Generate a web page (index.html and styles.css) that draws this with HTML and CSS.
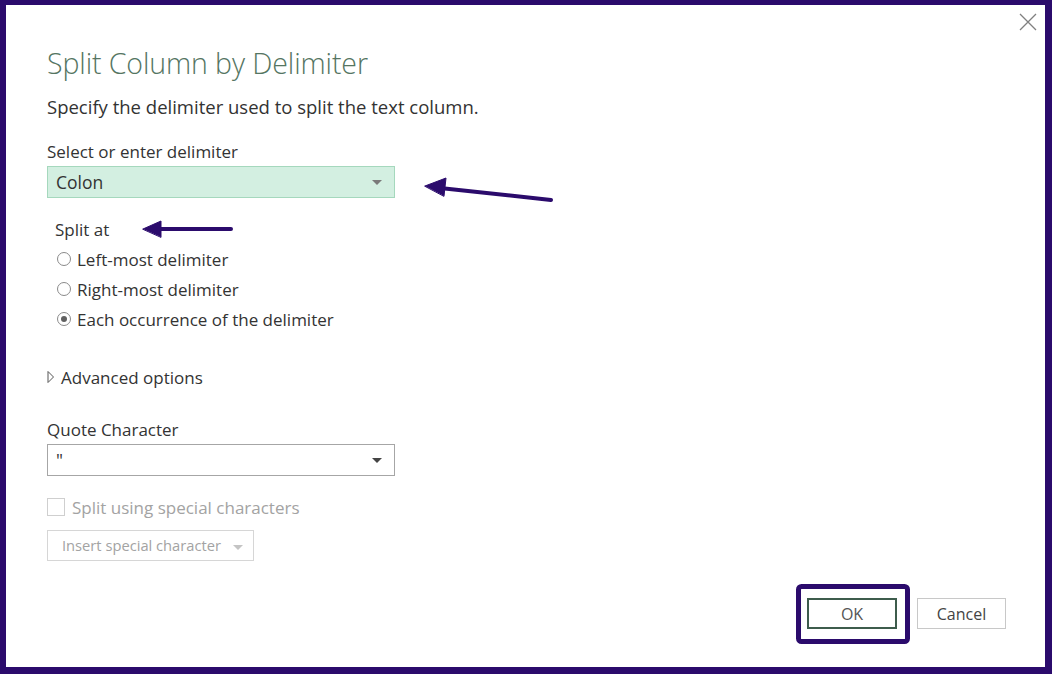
FILE: index.html
```html
<!DOCTYPE html>
<html>
	<head>
		<meta charset="utf-8">
		<title>Split Column by Delimiter</title>
		<link rel="stylesheet" href="styles.css">
	</head>
	<body>
		<div class="frame">
			<button class="close" title="Close">
				<svg width="18" height="18" viewBox="0 0 18 18"><path d="M1 1L17 17M17 1L1 17" stroke="#808080" stroke-width="1.3" fill="none"/></svg>
			</button>
			<div class="dialog">
				<h1 class="title">Split Column by Delimiter</h1>
				<p class="desc">Specify the delimiter used to split the text column.</p>

				<div class="label">Select or enter delimiter</div>
				<div class="select active">
					<span>Colon</span>
					<i class="caret"></i>
				</div>

				<div class="group">
					<div class="group-title">Split at</div>
					<label class="radio"><i class="dot"></i>Left-most delimiter</label>
					<label class="radio"><i class="dot"></i>Right-most delimiter</label>
					<label class="radio checked"><i class="dot"></i>Each occurrence of the delimiter</label>
				</div>

				<div class="advanced">
					<svg width="8" height="14" viewBox="0 0 8 14"><path d="M1 1.5L6.5 7L1 12.5Z" stroke="#555" stroke-width="1" fill="none"/></svg>
					Advanced options
				</div>

				<div class="label">Quote Character</div>
				<div class="select">
					<span>"</span>
					<i class="caret dark"></i>
				</div>

				<label class="check disabled"><i class="box"></i>Split using special characters</label>
				<div class="insert">Insert special character <i class="caret light"></i></div>

				<div class="footer">
					<button class="btn primary">OK</button>
					<button class="btn">Cancel</button>
				</div>
			</div>

			<!-- annotations -->
			<svg class="marks" width="1052" height="674" viewBox="0 0 1052 674">
				<g stroke="#2b0b6c" fill="#2b0b6c" stroke-linecap="round">
					<path d="M551 200L440 188" stroke-width="4"/>
					<path d="M425 186L446 178L444 196Z" stroke-width="1"/>
					<path d="M231 229L156 229" stroke-width="4"/>
					<path d="M143 229L161 221L161 237Z" stroke-width="1"/>
				</g>
				<rect x="798.5" y="586.5" width="109" height="55" rx="3" fill="none" stroke="#2b0b6c" stroke-width="5"/>
			</svg>
		</div>
	</body>
</html>
```

FILE: styles.css
```css
*{
	margin: 0;
	padding: 0;
	box-sizing: border-box;
}
body{
	background: #2b0b6c;
	font-family: "Segoe UI", "Open Sans", "Noto Sans", sans-serif;
	color: #333;
}
.frame{
	position: relative;
	width: 1052px;
	height: 674px;
	background: #fff;
	border-style: solid;
	border-color: #2b0b6c;
	border-width: 5px 7px 7px 6px;
}
.close{
	position: absolute;
	top: 8px;
	right: 8px;
	width: 18px;
	height: 18px;
	border: none;
	background: none;
}
.close svg{
	display: block;
}
.dialog{
	padding: 40px 39px 0 41px;
}
.title{
	font-weight: 300;
	font-size: 28.5px;
	line-height: 36px;
	color: #557562;
	letter-spacing: -0.1px;
}
.desc{
	margin-top: 14px;
	font-size: 18.5px;
	line-height: 24px;
}
.label{
	font-size: 17px;
	line-height: 22px;
}
.desc + .label{
	margin-top: 22px;
}
.select{
	margin-top: 3px;
	width: 348px;
	height: 32px;
	border: 1px solid #a6a6a6;
	background: #fff;
	display: flex;
	align-items: center;
	justify-content: space-between;
	padding: 0 12px 0 8px;
	font-size: 17.5px;
}
.select.active{
	background: #d3efe1;
	border-color: #a5d8bd;
}
.caret{
	width: 0;
	height: 0;
	border-left: 5px solid transparent;
	border-right: 5px solid transparent;
	border-top: 5px solid #7a7a7a;
}
.caret.dark{
	border-top-color: #444;
}
.caret.light{
	border-top-color: #c4c4c4;
	display: inline-block;
	vertical-align: middle;
	margin-left: 8px;
}
.group{
	margin-top: 21px;
	padding-left: 8px;
}
.group-title{
	font-size: 17px;
	line-height: 22px;
	margin-bottom: 3px;
}
.radio{
	display: flex;
	align-items: center;
	height: 30px;
	font-size: 17px;
	padding-left: 2px;
}
.dot{
	width: 14px;
	height: 14px;
	border: 1px solid #8a8a8a;
	border-radius: 50%;
	margin-right: 6px;
	position: relative;
}
.checked .dot::after{
	content: "";
	position: absolute;
	left: 3px;
	top: 3px;
	width: 6px;
	height: 6px;
	border-radius: 50%;
	background: #606060;
}
.advanced{
	margin-top: 31px;
	display: flex;
	align-items: center;
	height: 24px;
	font-size: 17px;
	gap: 6px;
}
.advanced + .label{
	margin-top: 30px;
}
.check{
	margin-top: 20px;
	display: flex;
	align-items: center;
	height: 22px;
	font-size: 17px;
}
.disabled{
	color: #a3a3a3;
}
.box{
	width: 18px;
	height: 18px;
	border: 1px solid #cfcfcf;
	margin-right: 7px;
}
.insert{
	margin-top: 12px;
	width: 207px;
	height: 31px;
	border: 1px solid #d6d6d6;
	color: #a3a3a3;
	font-size: 14.7px;
	line-height: 29px;
	padding-left: 14px;
}
.footer{
	margin-top: 37px;
	display: flex;
	justify-content: flex-end;
	gap: 20px;
}
.btn{
	width: 89px;
	height: 31px;
	background: #fff;
	border: 1px solid #c8c8c8;
	font-family: inherit;
	font-size: 16px;
	color: #444;
}
.btn.primary{
	width: 90px;
	border: 2px solid #3d5c4c;
	color: #555;
}
.marks{
	position: absolute;
	left: -6px;
	top: -5px;
	pointer-events: none;
}
```
